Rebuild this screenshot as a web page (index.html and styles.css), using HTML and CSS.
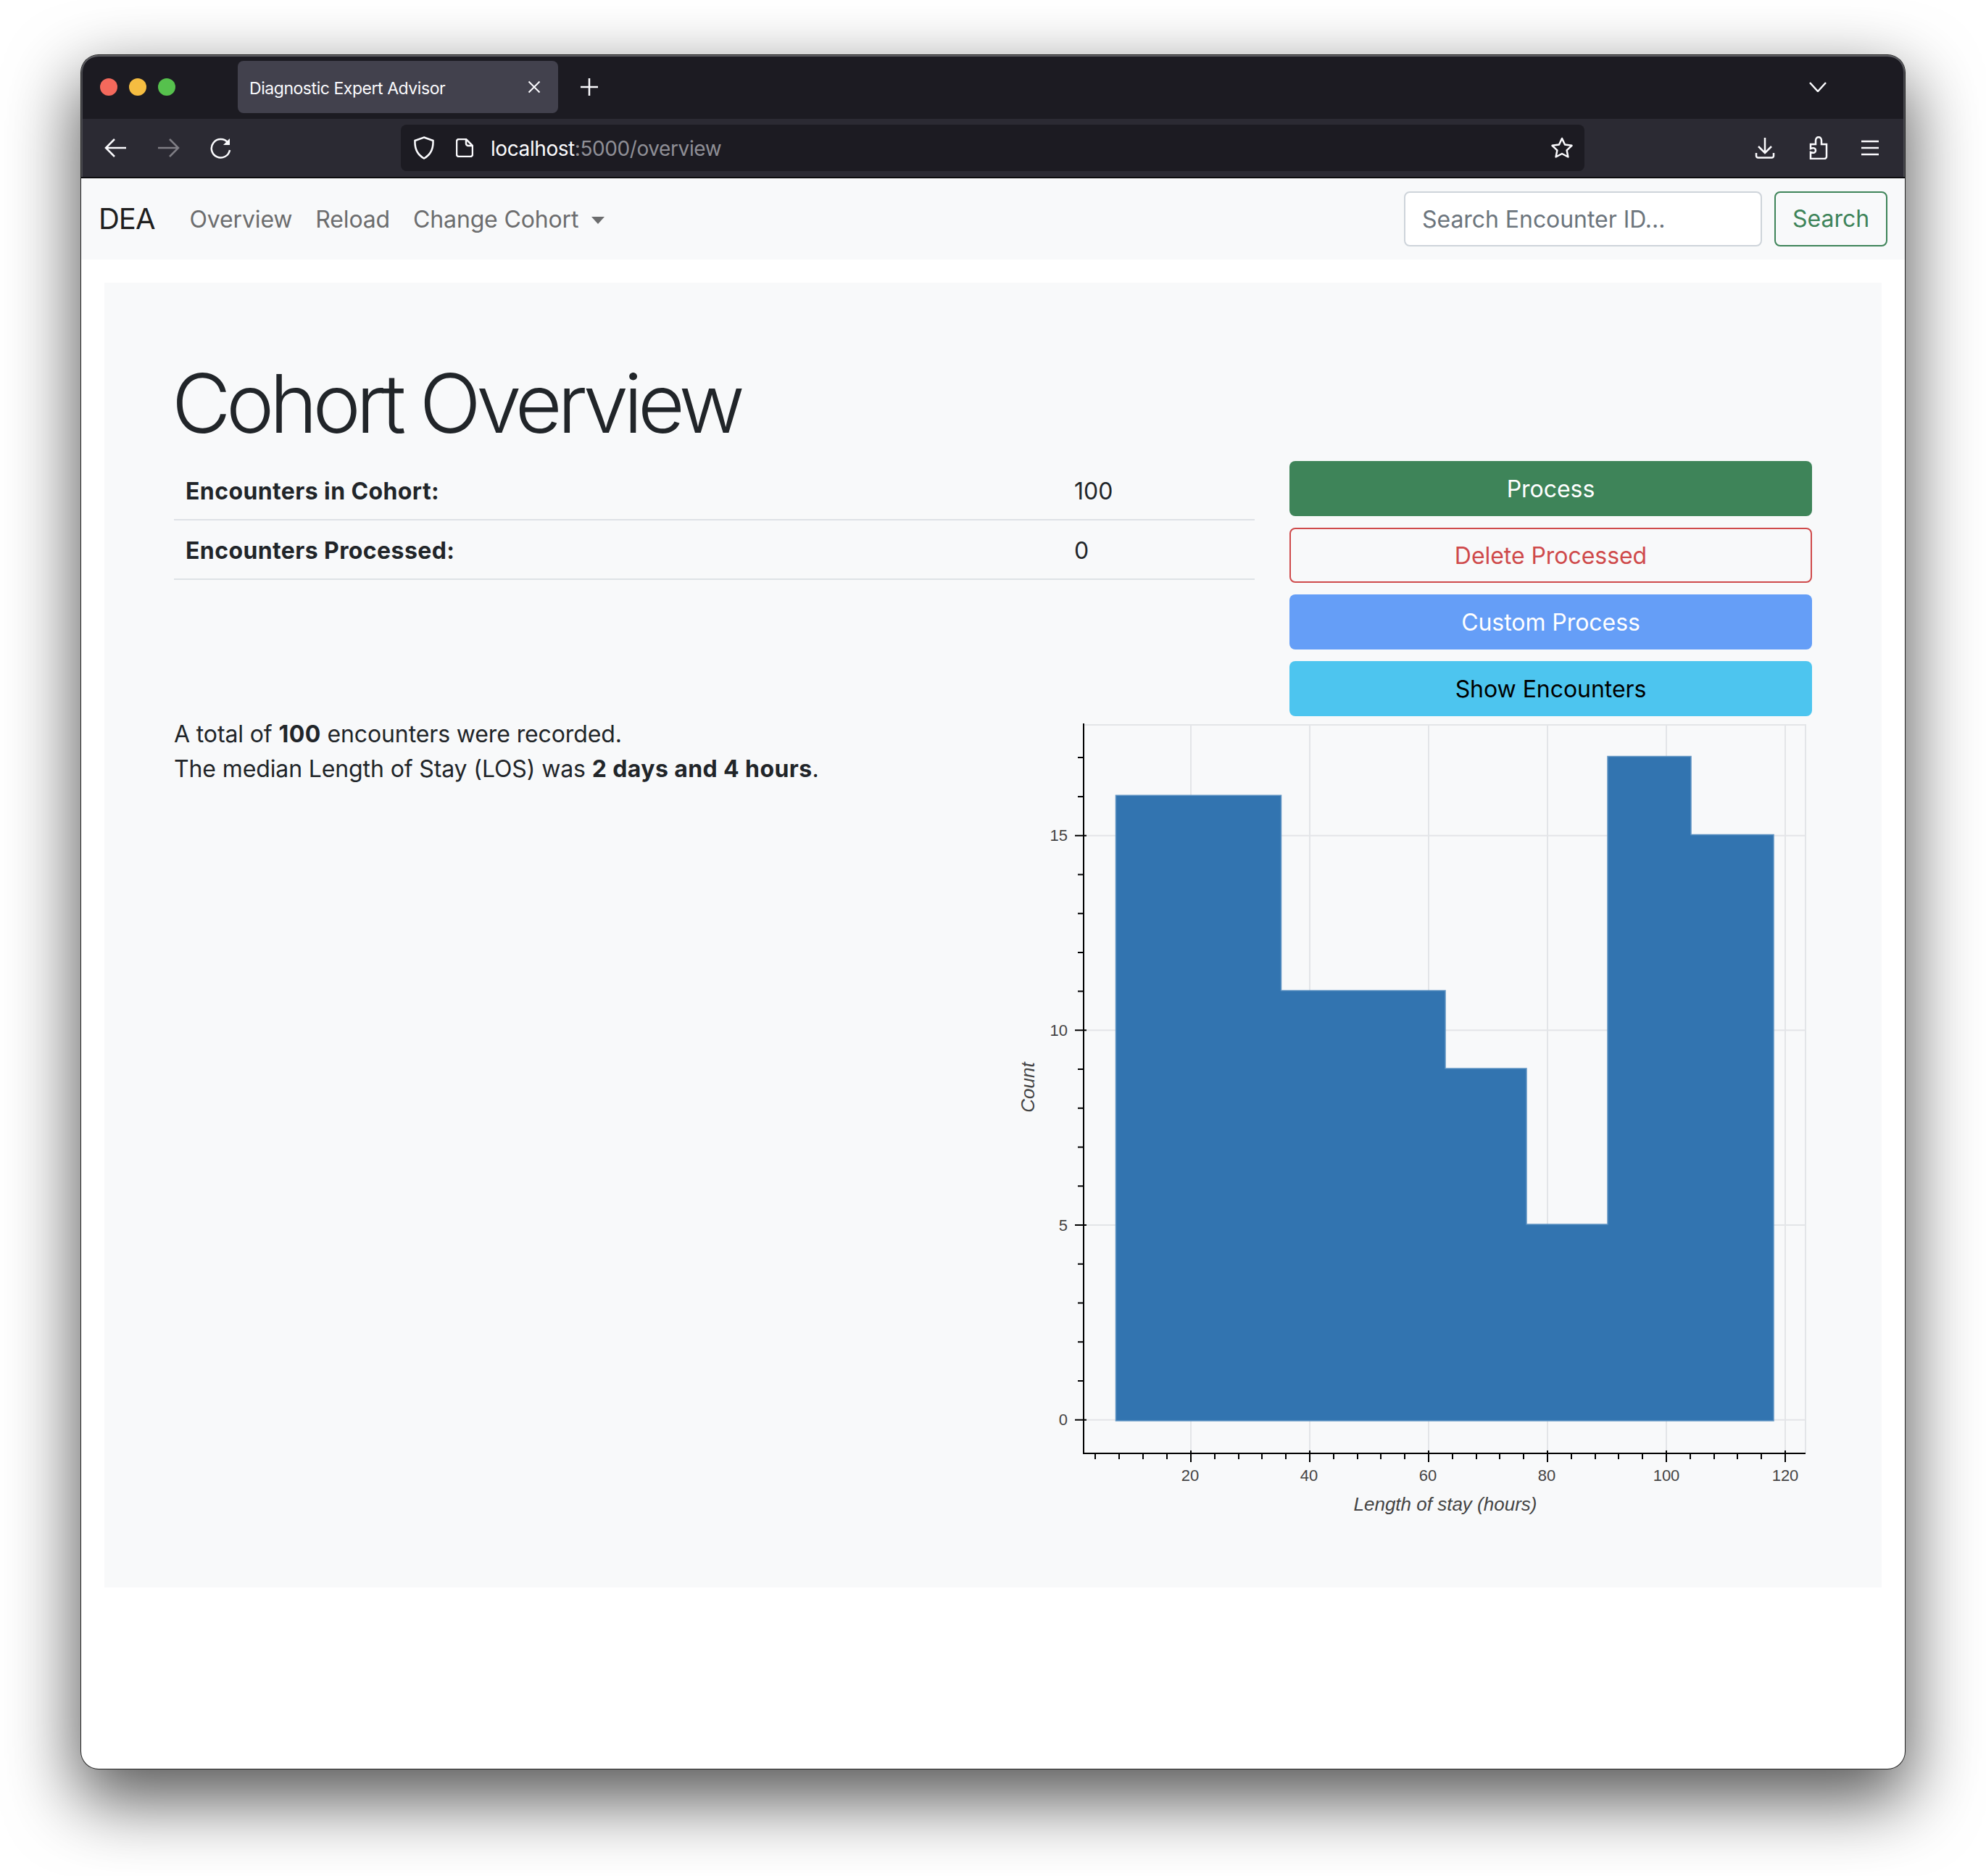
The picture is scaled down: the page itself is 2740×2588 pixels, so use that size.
FILE: index.html
```html
<!DOCTYPE html>
<html lang="en">
<head>
<meta charset="utf-8">
<title>Diagnostic Expert Advisor</title>
<link rel="stylesheet" href="styles.css">
</head>
<body>
<div class="window">
  <div class="tabbar">
    <div class="lights"><span class="light red"></span><span class="light yellow"></span><span class="light green"></span></div>
    <div class="tab">
      <span class="tab-title">Diagnostic Expert Advisor</span>
      <svg class="tab-close" viewBox="0 0 18 18"><path d="M1.5 1.5 16.5 16.5M16.5 1.5 1.5 16.5"/></svg>
    </div>
    <svg class="new-tab" viewBox="0 0 26 26"><path d="M13 1V25M1 13H25"/></svg>
    <svg class="tab-list" viewBox="0 0 24 14"><path d="M1 1 12 13 23 1"/></svg>
  </div>
  <div class="toolbar">
    <svg class="tool" viewBox="0 0 32 28"><path d="M30 14H3M14 2 2 14 14 26"/></svg>
    <svg class="tool dim" viewBox="0 0 32 28"><path d="M2 14H29M18 2 30 14 18 26"/></svg>
    <svg class="tool" viewBox="0 0 32 30"><path d="M26.500 8A12.700 12.700 0 1 0 29 18"/><path class="solid" d="M29 2V11H20Z"/></svg>
    <div class="urlbar">
      <svg class="shield" viewBox="0 0 28 32"><path d="M14 1.500 26.500 6C27 17 24 25 14 30.500 4 25 1 17 1.500 6Z"/></svg>
      <svg class="page" viewBox="0 0 24 26"><path d="M4 1H14L23 10V22A3 3 0 0 1 20 25H4A3 3 0 0 1 1 22V4A3 3 0 0 1 4 1Z"/><path d="M14 1V7A3 3 0 0 0 17 10H23"/></svg>
      <span class="url">localhost<span class="url-dim">:5000/overview</span></span>
      <svg class="star" viewBox="0 0 32 30"><path d="M16 2 20 10.500 29.500 11.800 22.600 18.300 24.400 27.500 16 23 7.600 27.500 9.400 18.300 2.500 11.800 12 10.500Z"/></svg>
    </div>
    <div class="tool-right">
      <svg class="tool" viewBox="0 0 32 30"><path d="M16 1V21M7 13 16 22 25 13M4 22V26A2.500 2.500 0 0 0 6.500 28.500H25.500A2.500 2.500 0 0 0 28 26V22"/></svg>
      <svg class="tool" viewBox="0 0 32 32"><path d="M5 31H24A3 3 0 0 0 27 28V11H20V6C20 -0.500 12 -0.500 12 6V11H5V17C10 15 12 17 12 19.500S10 24 5 22Z"/></svg>
      <svg class="tool menu" viewBox="0 0 32 28"><path d="M4 5H28M4 14H28M4 23H28"/></svg>
    </div>
  </div>
  <nav class="navbar">
    <a class="brand">DEA</a>
    <a class="nav-link">Overview</a>
    <a class="nav-link">Reload</a>
    <a class="nav-link dropdown">Change Cohort</a>
    <form class="search">
      <input class="search-input" type="text" placeholder="Search Encounter ID...">
      <button class="search-btn" type="button">Search</button>
    </form>
  </nav>
  <main class="jumbotron">
    <h1 class="title">Cohort Overview</h1>
    <section class="top-row">
      <table class="stats">
        <tr><th>Encounters in Cohort:</th><td>100</td></tr>
        <tr><th>Encounters Processed:</th><td>0</td></tr>
      </table>
      <div class="actions">
        <button class="btn btn-green" type="button">Process</button>
        <button class="btn btn-red" type="button">Delete Processed</button>
        <button class="btn btn-blue" type="button">Custom Process</button>
        <button class="btn btn-cyan" type="button">Show Encounters</button>
      </div>
    </section>
    <section class="bottom-row">
      <p class="summary">A total of <strong>100</strong> encounters were recorded.<br>The median Length of Stay (LOS) was <strong>2 days and 4 hours</strong>.</p>
      <svg class="chart" viewBox="1400 988 1100 1106">
        <g class="grid">
          <path d="M1495 1000H2491M2491 999V2005"/>
          <path d="M1643 999V2005M1807 999V2005M1971 999V2005M2135 999V2005M2299 999V2005M2463 999V2005"/>
          <path d="M1495 1152.700H2491M1495 1421.300H2491M1495 1690H2491M1495 1958.700H2491"/>
        </g>
        <path class="bars" d="M1539.500 1960V1097.300H1767.500V1366.500H1994V1474H2106V1689H2218V1043.500H2333V1151.500H2447V1960Z"/>
        <g class="axis">
          <path d="M1495 998V2006M1494 2005H2491"/>
          <path d="M1483 1152.700H1499M1483 1421.300H1499M1483 1690H1499M1483 1958.700H1499"/>
          <path d="M1487 1045H1495M1487 1099H1495M1487 1206.400H1495M1487 1260.200H1495M1487 1313.900H1495M1487 1367.600H1495M1487 1475H1495M1487 1528.800H1495M1487 1582.500H1495M1487 1636.200H1495M1487 1743.700H1495M1487 1797.400H1495M1487 1851.200H1495M1487 1904.900H1495"/>
          <path d="M1643 2001V2017M1807 2001V2017M1971 2001V2017M2135 2001V2017M2299 2001V2017M2463 2001V2017"/>
          <path d="M1511 2005V2013M1544 2005V2013M1577 2005V2013M1610 2005V2013M1676 2005V2013M1709 2005V2013M1741 2005V2013M1774 2005V2013M1840 2005V2013M1873 2005V2013M1905 2005V2013M1938 2005V2013M2004 2005V2013M2037 2005V2013M2069 2005V2013M2102 2005V2013M2168 2005V2013M2201 2005V2013M2233 2005V2013M2266 2005V2013M2332 2005V2013M2365 2005V2013M2397 2005V2013M2430 2005V2013"/>
        </g>
        <g class="y-labels">
          <text x="1473" y="1160">15</text>
          <text x="1473" y="1429">10</text>
          <text x="1473" y="1698">5</text>
          <text x="1473" y="1966">0</text>
        </g>
        <g class="x-labels">
          <text x="1642" y="2043">20</text>
          <text x="1806" y="2043">40</text>
          <text x="1970" y="2043">60</text>
          <text x="2134" y="2043">80</text>
          <text x="2299" y="2043">100</text>
          <text x="2463" y="2043">120</text>
        </g>
        <text class="axis-label" x="1994" y="2084">Length of stay (hours)</text>
        <text class="axis-label" transform="translate(1427 1500) rotate(-90)">Count</text>
      </svg>
    </section>
  </main>
</div>
</body>
</html>
```
FILE: styles.css
```css
* { box-sizing: border-box; }
html, body { margin: 0; background: #fff; }
body {
  padding: 76px 112px 148px;
  font-family: Inter, "Noto Sans", sans-serif;
  font-size: 32px;
  line-height: 48px;
  color: #212529;
  overflow: hidden;
}
.window {
  width: 2516px;
  height: 2364px;
  background: #fff;
  border-radius: 24px;
  box-shadow: 0 0 0 1px #222, 0 38px 96px 6px rgba(0, 0, 0, .66);
}
.tabbar {
  display: flex;
  align-items: center;
  height: 88px;
  background: #1c1b22;
  border-radius: 24px 24px 0 0;
  box-shadow: inset 0 2px #5f5f64, inset 2px 0 #4a4a50, inset -2px 0 #4a4a50;
}
.lights { display: flex; gap: 16px; margin-left: 26px; }
.light { width: 24px; height: 24px; border-radius: 50%; }
.red { background: #f4695c; }
.yellow { background: #f5bd41; }
.green { background: #56c14d; }
.tab {
  display: flex;
  align-items: center;
  justify-content: space-between;
  width: 442px;
  height: 72px;
  margin-left: 86px;
  padding: 4px 24px 0 16px;
  background: #42414d;
  border-radius: 8px;
}
.tab-title { font-size: 23px; line-height: 32px; color: #fbfbfe; letter-spacing: -.45px; }
.tab-close { width: 18px; height: 18px; margin-top: -4px; fill: none; stroke: #fbfbfe; stroke-width: 2; }
.new-tab { width: 26px; height: 26px; margin-left: 30px; fill: none; stroke: #fbfbfe; stroke-width: 2.5; }
.tab-list { width: 24px; height: 14px; margin-left: auto; margin-right: 108px; fill: none; stroke: #fbfbfe; stroke-width: 2.5; }
.toolbar {
  display: flex;
  align-items: center;
  gap: 40px;
  height: 82px;
  padding: 0 32px;
  background: #2b2a33;
  border-bottom: 2px solid #0c0c0f;
  box-shadow: inset 2px 0 #4a4a50, inset -2px 0 #4a4a50;
}
.tool { width: 32px; height: 32px; flex: none; fill: none; stroke: #fbfbfe; stroke-width: 2.5; }
.tool .solid { fill: #fbfbfe; stroke: none; }
.dim { stroke: #7f7e85; }
.urlbar {
  display: flex;
  align-items: center;
  width: 1633px;
  height: 64px;
  margin-left: 193px;
  padding: 0 16px 0 18px;
  background: #1c1b22;
  border-radius: 8px;
}
.shield { width: 28px; height: 32px; fill: none; stroke: #fbfbfe; stroke-width: 2.5; }
.page { width: 24px; height: 26px; margin-left: 30px; fill: none; stroke: #fbfbfe; stroke-width: 2.5; }
.url { margin-left: 24px; padding-top: 1px; font-size: 28px; line-height: 40px; color: #fbfbfe; letter-spacing: -.42px; }
.url-dim { color: #8f8f96; }
.star { width: 32px; height: 30px; margin-left: auto; margin-right: -1px; fill: none; stroke: #fbfbfe; stroke-width: 2.5; stroke-linejoin: round; }
.tool-right { display: flex; gap: 42px; margin-left: auto; }
.menu { margin-left: -3px; }
.navbar {
  display: flex;
  align-items: center;
  height: 112px;
  padding: 0 24px;
  background: #f8f9fa;
}
.brand { margin-right: 32px; font-size: 40px; line-height: 60px; letter-spacing: -1px; color: rgba(0, 0, 0, .9); }
.nav-link { padding: 1px 16px 0; color: #6c6d6e; letter-spacing: -.15px; }
.dropdown::after {
  content: "";
  display: inline-block;
  margin-left: 18px;
  vertical-align: 5px;
  border-top: 10px solid #6c6d6e;
  border-left: 9.600px solid transparent;
  border-right: 9.600px solid transparent;
}
.search { display: flex; gap: 17px; margin-left: auto; }
.search-input {
  width: 494px;
  height: 76px;
  padding: 0 23px;
  border: 2px solid #ced4da;
  border-radius: 8px;
  background: #fff;
  font: inherit;
  letter-spacing: -.05px;
  color: #212529;
}
.search-input::placeholder { color: #6c757d; opacity: 1; }
.search-btn {
  width: 156px;
  height: 76px;
  padding: 0;
  border: 2px solid #3e8459;
  border-radius: 8px;
  background: transparent;
  color: #3e8459;
  font: inherit;
}
.jumbotron {
  height: 1800px;
  margin: 32px 32px 0;
  padding: 96px;
  background: #f8f9fa;
}
.title {
  margin: 0 0 13px -3px;
  padding-top: 3px;
  font-size: 112px;
  line-height: 134px;
  font-weight: 300;
  letter-spacing: -6.500px;
}
.top-row { display: flex; gap: 48px; align-items: flex-start; }
.stats { flex: none; width: 1491px; border-collapse: separate; border-spacing: 0; }
.stats th, .stats td {
  height: 82px;
  padding: 18px 16px 14px;
  border-bottom: 2px solid #dee2e6;
  text-align: left;
}
.stats th { width: 1226px; font-weight: 700; letter-spacing: .4px; }
.actions { display: flex; flex-direction: column; gap: 16px; flex: 1; }
.btn {
  height: 76px;
  padding-top: 3px;
  border: 2px solid transparent;
  border-radius: 8px;
  font: inherit;
  letter-spacing: -.05px;
  color: #fff;
}
.btn-green { background: #3e8459; }
.btn-red { background: transparent; border-color: #cf4a4b; color: #cf4a4b; }
.btn-blue { background: #659ef7; }
.btn-cyan { background: #4dc5ef; color: #000; }
.bottom-row { display: flex; justify-content: space-between; align-items: flex-start; }
.summary { margin: 0; padding-top: 1px; letter-spacing: -.12px; }
.summary strong { letter-spacing: .4px; }
.chart { flex: none; width: 1100px; height: 1106px; }
.grid path { fill: none; stroke: #e3e5e8; stroke-width: 2; }
.bars { fill: #3274b0; stroke: #5d92c2; stroke-width: 1.500; }
.axis path { fill: none; stroke: #000; stroke-width: 2; }
.y-labels text, .x-labels text, .axis-label {
  font-family: "Liberation Sans", Arial, sans-serif;
  fill: #444;
}
.y-labels text { font-size: 22px; text-anchor: end; }
.x-labels text { font-size: 22px; text-anchor: middle; }
.axis-label { font-size: 26px; font-style: italic; text-anchor: middle; }
```
